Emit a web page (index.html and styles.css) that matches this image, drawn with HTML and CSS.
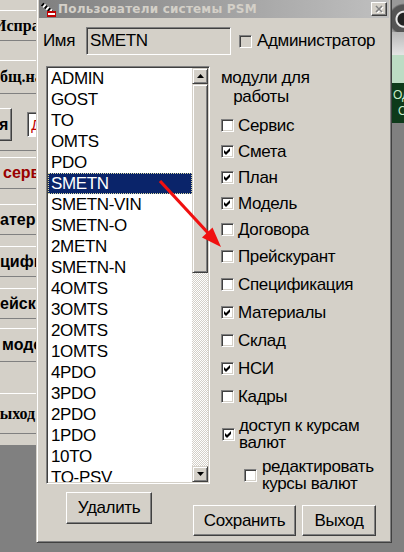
FILE: index.html
```html
<!DOCTYPE html>
<html lang="ru">
<head>
<meta charset="utf-8">
<title>Пользователи системы PSM</title>
<link rel="stylesheet" href="styles.css">
</head>
<body>
<div class="app">
  <div class="panel p1 serif"><span class="cut6">Исправить</span></div>
  <div class="panel p2 serif"><span>бщ.настройки</span></div>
  <div class="panel p3">
    <div class="appbtn sans">я</div>
    <div class="appfield">Д</div>
  </div>
  <div class="panel p4 sans red"><span class="pad3">сервера</span></div>
  <div class="panel p5 sans"><span>атериалы</span></div>
  <div class="panel p6 sans"><span>цификация</span></div>
  <div class="panel p7 sans"><span>ейскурант</span></div>
  <div class="panel p8 sans"><span class="pad2">модели</span></div>
  <div class="panel p9 serif"><span class="cut10">Выход</span></div>
</div>

<div class="dialog">
  <div class="titlebar">
    <svg class="ticon" viewBox="0 0 16 16" width="16" height="16">
      <path d="M2 3 L12 11" stroke="#fff" stroke-width="4"/>
      <path d="M2 3 L12 11" stroke="#000" stroke-width="4" stroke-dasharray="2 2"/>
      <rect x="7" y="10" width="9" height="6" fill="#c00000"/>
      <rect x="8" y="12" width="7" height="2" fill="#fff"/>
    </svg>
    <span class="ttext">Пользователи системы PSM</span>
    <div class="tclose">
      <svg viewBox="0 0 10 8" width="10" height="8">
        <path d="M2 1 L8 7 M8 1 L2 7" stroke="#fff" stroke-width="1.6" transform="translate(1 1)"/>
        <path d="M2 1 L8 7 M8 1 L2 7" stroke="#808080" stroke-width="1.6"/>
      </svg>
    </div>
  </div>

  <div class="content">
    <div class="namerow">
      <span class="namelabel">Имя</span>
      <div class="field">SMETN</div>
      <span class="box disabled adminbox"></span>
      <span class="adminlabel">Администратор</span>
    </div>

    <div class="main">
      <div class="list">
        <div class="items">
          <div class="item">ADMIN</div>
          <div class="item">GOST</div>
          <div class="item">TO</div>
          <div class="item">OMTS</div>
          <div class="item">PDO</div>
          <div class="item selected">SMETN</div>
          <div class="item">SMETN-VIN</div>
          <div class="item">SMETN-O</div>
          <div class="item">2METN</div>
          <div class="item">SMETN-N</div>
          <div class="item">4OMTS</div>
          <div class="item">3OMTS</div>
          <div class="item">2OMTS</div>
          <div class="item">1OMTS</div>
          <div class="item">4PDO</div>
          <div class="item">3PDO</div>
          <div class="item">2PDO</div>
          <div class="item">1PDO</div>
          <div class="item">10TO</div>
          <div class="item">TO-PSV</div>
        </div>
        <div class="scroll">
          <div class="sbbtn"><svg viewBox="0 0 7 4" width="7" height="4"><path d="M3.5 0 L7 4 L0 4Z"/></svg></div>
          <div class="thumb"></div>
          <div class="track"></div>
          <div class="sbbtn"><svg viewBox="0 0 7 4" width="7" height="4"><path d="M0 0 L7 0 L3.5 4Z"/></svg></div>
        </div>
      </div>

      <div class="modules">
        <div class="heading">модули для<br>работы</div>
        <div class="group g1">
          <div class="cb"><span class="box"></span><span>Сервис</span></div>
          <div class="cb"><span class="box checked"></span><span>Смета</span></div>
          <div class="cb"><span class="box checked"></span><span>План</span></div>
          <div class="cb"><span class="box checked"></span><span>Модель</span></div>
          <div class="cb"><span class="box"></span><span>Договора</span></div>
        </div>
        <div class="group g2">
          <div class="cb"><span class="box"></span><span>Прейскурант</span></div>
          <div class="cb"><span class="box"></span><span>Спецификация</span></div>
          <div class="cb"><span class="box checked"></span><span>Материалы</span></div>
          <div class="cb"><span class="box"></span><span>Склад</span></div>
          <div class="cb"><span class="box checked"></span><span>НСИ</span></div>
          <div class="cb"><span class="box"></span><span>Кадры</span></div>
        </div>
        <div class="cb2 cur"><span class="box checked"></span><span>доступ к курсам<br>валют</span></div>
        <div class="cb2 edit"><span class="box"></span><span>редактировать<br>курсы валют</span></div>
      </div>

      <div class="actions">
        <div class="btn del">Удалить</div>
        <div class="btn save">Сохранить</div>
        <div class="btn exit">Выход</div>
      </div>
    </div>
  </div>
</div>

<div class="desk">
  <div class="d1"></div>
  <div class="d2"></div>
  <div class="d3"></div>
  <div class="d4"><span>ОД</span><span class="d4b">О</span></div>
</div>

<svg class="arrow" viewBox="0 0 404 552" width="404" height="552">
  <line x1="160" y1="181" x2="209" y2="234" stroke="#f01010" stroke-width="3.2"/>
  <polygon points="221,247 202,237.5 212.5,227.5" fill="#f01010"/>
</svg>
</body>
</html>
```

FILE: styles.css
```css
* { box-sizing: border-box; }
html, body { margin: 0; padding: 0; }
body {
  width: 404px;
  height: 552px;
  overflow: hidden;
  position: relative;
  background: #808080;
  display: flex;
  align-items: flex-start;
  font-family: "Liberation Sans", Arial, sans-serif;
  font-size: 17px;
  letter-spacing: -0.35px;
  color: #000;
}

/* ---------- background application on the left ---------- */
.app {
  flex: none;
  width: 36px;
  height: 445px;
  background: #d4d0c8;
  overflow: hidden;
  display: flex;
  flex-direction: column;
  letter-spacing: 0;
}
.panel {
  flex: none;
  display: flex;
  align-items: center;
  white-space: nowrap;
  overflow: hidden;
  border-top: 1px solid #fff;
  border-bottom: 1px solid #808080;
}
.serif { font: bold 16px "Liberation Serif", serif; }
.sans { font: bold 16px "Liberation Sans", sans-serif; }
.red { color: #9a0000; }
.cut6 { margin-left: -6px; }
.cut10 { margin-left: -11px; }
.pad3 { padding-left: 3px; }
.pad2 { padding-left: 2px; }
.p1 { margin-top: 10px; height: 31px; }
.p2 { margin-top: 19px; height: 34px; }
.p3 { margin-top: 6px; height: 51px; align-items: flex-start; border-top: none; }
.p4 { margin-top: 6px; height: 32px; }
.p5 { margin-top: 15px; height: 31px; }
.p6 { margin-top: 11px; height: 31px; }
.p7 { margin-top: 11px; height: 31px; }
.p8 { margin-top: 9px; height: 34px; }
.p9 { margin-top: 31px; height: 41px; }
.appbtn {
  margin: 8px 0 0 -2px;
  width: 16px;
  height: 33px;
  border: 1px solid;
  border-color: #fff #404040 #404040 #fff;
  box-shadow: inset -1px -1px #808080;
  display: flex;
  align-items: center;
  justify-content: flex-end;
  padding-right: 3px;
}
.appfield {
  margin: 12px 0 0 15px;
  width: 20px;
  height: 25px;
  background: #fff;
  border: 1px solid;
  border-color: #808080 #fff #fff #808080;
  box-shadow: inset 1px 1px #404040;
  color: #c00000;
  font: 14px "Liberation Sans", sans-serif;
  padding: 4px 0 0 3px;
}

/* ---------- dialog ---------- */
.dialog {
  flex: none;
  width: 356px;
  height: 546px;
  margin-top: -3px;
  background: #d4d0c8;
  border: 1px solid;
  border-color: #d4d0c8 #404040 #404040 #d4d0c8;
  box-shadow: inset 1px 1px #fff, inset -1px -1px #808080;
  padding: 2px;
  display: flex;
  flex-direction: column;
}
.titlebar {
  flex: none;
  height: 18px;
  display: flex;
  align-items: center;
  padding: 0 2px 0 1px;
  background: linear-gradient(to right, #808080, #c0c0c0);
}
.ticon { flex: none; }
.ttext {
  margin-left: 2px;
  font: bold 12px "DejaVu Sans", sans-serif;
  letter-spacing: 0.2px;
  color: #d4d0c8;
  white-space: nowrap;
}
.tclose {
  margin-left: auto;
  width: 16px;
  height: 14px;
  background: #d4d0c8;
  border: 1px solid;
  border-color: #fff #404040 #404040 #fff;
  box-shadow: inset -1px -1px #808080;
  display: flex;
  align-items: center;
  justify-content: center;
}

.content {
  flex: 1;
  padding: 9px 0 0 4px;
}
.namerow {
  display: flex;
  align-items: center;
  height: 28px;
  white-space: nowrap;
}
.namelabel { width: 43px; }
.field {
  width: 145px;
  height: 28px;
  border: 1px solid;
  border-color: #808080 #fff #fff #808080;
  box-shadow: inset 1px 1px #404040, inset -1px -1px #d4d0c8;
  padding: 0 3px;
  display: flex;
  align-items: center;
  background: #d4d0c8;
}
.adminbox { margin-left: 8px; }
.adminlabel { margin-left: 5px; }

/* checkboxes */
.box {
  flex: none;
  width: 13px;
  height: 13px;
  background: #fff;
  border: 1px solid;
  border-color: #808080 #fff #fff #808080;
  box-shadow: inset 1px 1px #404040, inset -1px -1px #d4d0c8;
}
.box.disabled { background: #d4d0c8; }
.box.checked {
  background: #fff url("data:image/svg+xml,%3Csvg xmlns='http://www.w3.org/2000/svg' viewBox='0 0 11 11' width='11' height='11'%3E%3Cpath d='M2 4 v3 l2 2 l4-4 v-3 l-4 4z'/%3E%3C/svg%3E") no-repeat 0 0 / 11px 11px;
}

.main {
  margin: 11px 0 0 3px;
  display: grid;
  grid-template-columns: 164px 1fr;
  grid-template-rows: 418px auto;
  column-gap: 11px;
}

/* list box */
.list {
  display: flex;
  background: #fff;
  border: 1px solid;
  border-color: #808080 #fff #fff #808080;
  box-shadow: inset 1px 1px #404040, inset -1px -1px #d4d0c8;
  padding: 1px;
}
.items {
  flex: 1;
  overflow: hidden;
}
.item {
  height: 21px;
  line-height: 21px;
  padding-left: 3px;
  white-space: nowrap;
}
.item.selected {
  background: #0a246a;
  color: #fff;
  outline: 1px dotted #d8d8a0;
  outline-offset: -1px;
}
.scroll {
  flex: none;
  width: 16px;
  display: flex;
  flex-direction: column;
}
.sbbtn, .thumb {
  flex: none;
  background: #d4d0c8;
  border: 1px solid;
  border-color: #d4d0c8 #404040 #404040 #d4d0c8;
  box-shadow: inset 1px 1px #fff, inset -1px -1px #808080;
}
.sbbtn {
  height: 16px;
  display: flex;
  align-items: center;
  justify-content: center;
}
.thumb { height: 189px; }
.track {
  flex: 1;
  background: repeating-conic-gradient(#fff 0 25%, #d4d0c8 0 50%) 0 0 / 2px 2px;
}

/* module checkboxes */
.modules { padding-top: 2px; white-space: nowrap; }
.heading {
  width: 80px;
  text-align: center;
  line-height: 19px;
}
.g1 { margin-top: 6px; }
.cb {
  display: flex;
  align-items: center;
  gap: 4px;
  line-height: 19px;
}
.g1 .cb { height: 26px; }
.g2 .cb { height: 28px; }
.cb2 {
  display: flex;
  align-items: center;
  line-height: 17px;
}
.cur { margin: 7px 0 0 1px; gap: 4px; }
.edit { margin: 7px 0 0 23px; gap: 5px; }

/* buttons */
.actions {
  grid-column: 1 / -1;
  display: flex;
  align-items: flex-start;
}
.btn {
  flex: none;
  display: flex;
  align-items: center;
  justify-content: center;
  border: 1px solid;
  border-color: #fff #404040 #404040 #fff;
  box-shadow: inset -1px -1px #808080;
}
.del { margin: 8px 0 0 20px; width: 86px; height: 32px; }
.save { margin: 21px 0 0 41px; width: 103px; height: 31px; }
.exit { margin: 21px 0 0 6px; width: 74px; height: 31px; }

/* ---------- desktop strip on the right ---------- */
.desk {
  flex: none;
  width: 12px;
  display: flex;
  flex-direction: column;
}
.d1 {
  height: 32px;
  background: radial-gradient(circle at 100% 60%, #222 0 6px, #e8e8e8 7px 8px, #555 9px 14px, #999 16px);
}
.d2 { height: 23px; background: linear-gradient(#b8b8b8, #e4e4e4); }
.d3 { height: 28px; background: #bcdcc4; }
.d4 {
  height: 40px;
  background: #0d3a1a;
  color: #c8ecc8;
  font: 12px "Liberation Sans", sans-serif;
  letter-spacing: 0;
  display: flex;
  flex-direction: column;
  overflow: hidden;
  white-space: nowrap;
  padding: 4px 0 0 1px;
  line-height: 16px;
}
.d4b { padding-left: 5px; }

/* red annotation arrow drawn over the screenshot */
.arrow {
  position: absolute;
  left: 0;
  top: 0;
  pointer-events: none;
}
```
